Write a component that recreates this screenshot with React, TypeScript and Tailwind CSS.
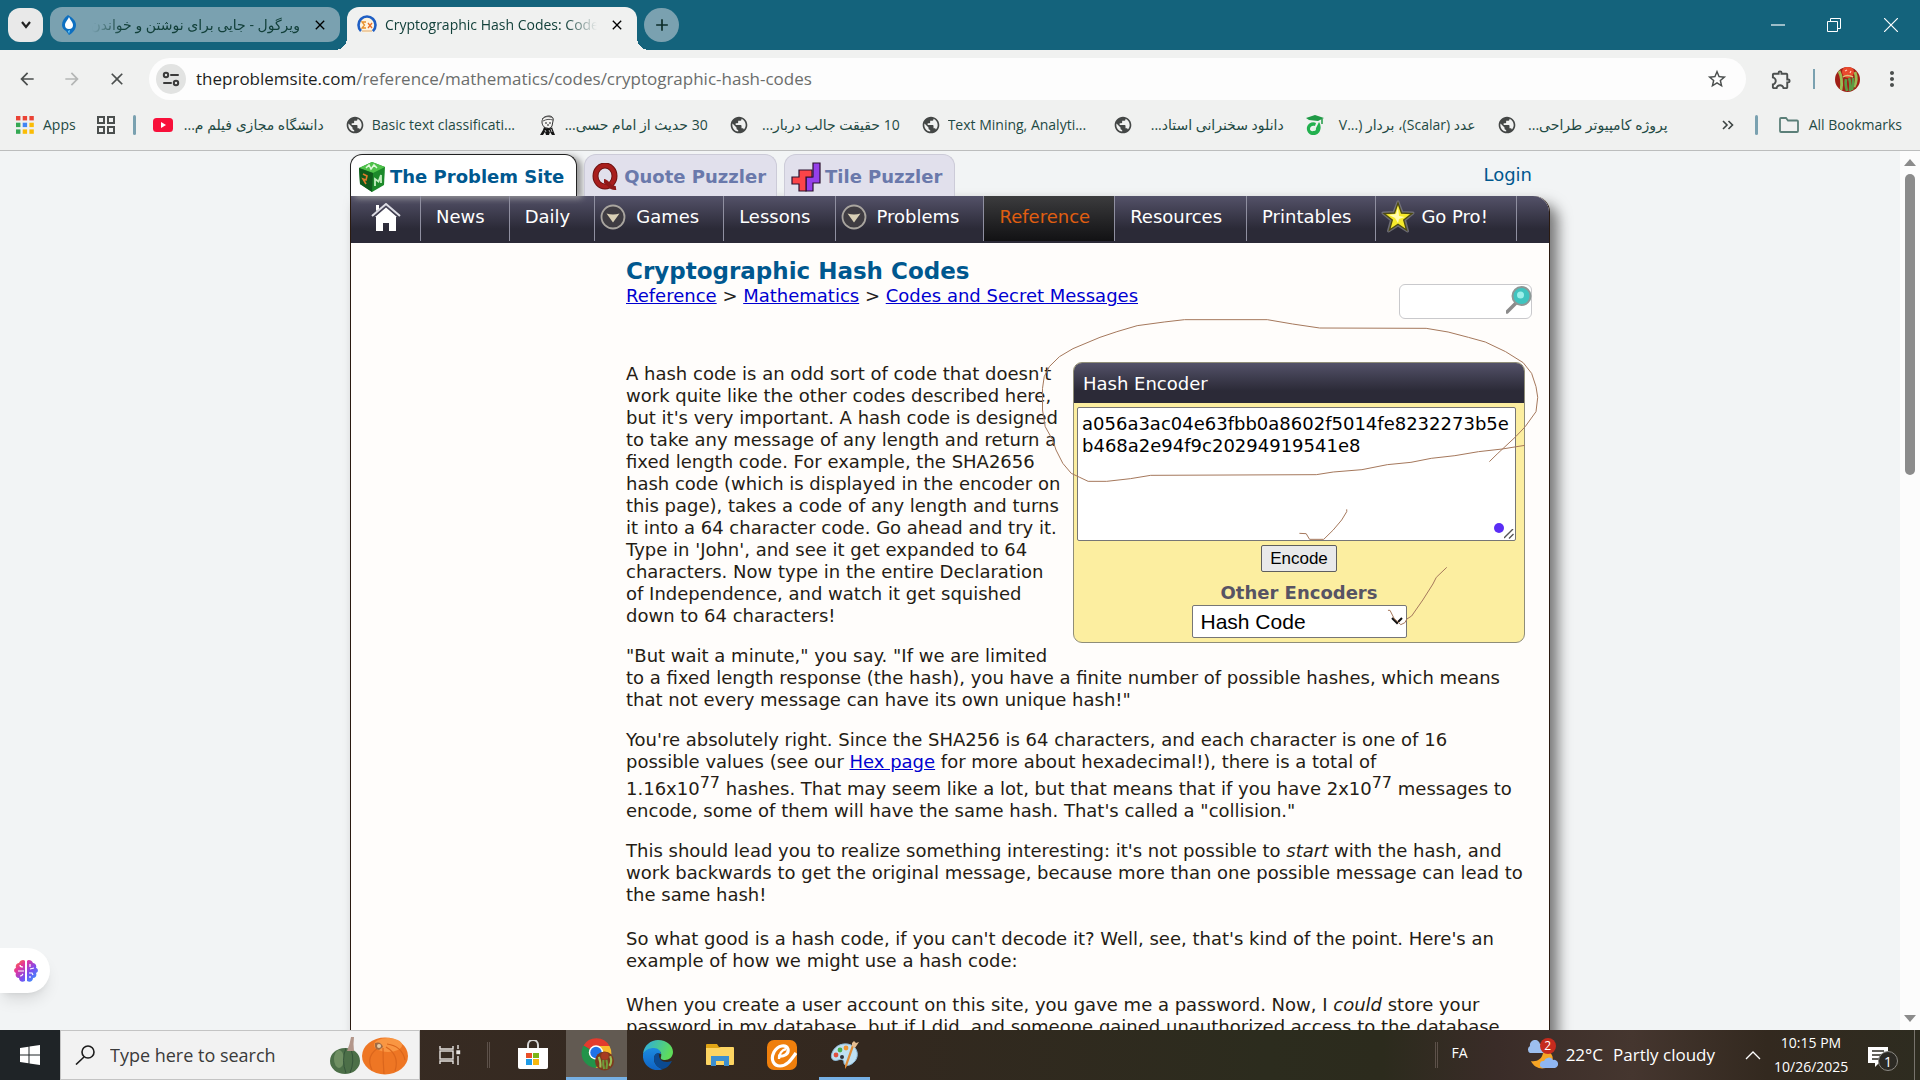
import type { ReactNode } from "react";
import { MdPublic, MdOutlineExtension, MdStarBorder, MdMoreVert, MdArrowBack, MdArrowForward, MdClose, MdAdd } from "react-icons/md";

const VERDANA = "font-['DejaVu_Sans',Verdana,sans-serif]";

/* ---------- small drawings ---------- */

function VirgoolIcon() {
  return (
    <svg viewBox="0 0 14 20" className="h-5 w-3.5 shrink-0">
      <path d="M6 0C2 3 0 6 0 10c0 3 2 5 4 6l3 4c4-2 7-6 7-10 0-4-3-7-8-10z" fill="#0d6fc0" />
      <path d="M7 2c1 3 4 5 4 8a4 4 0 0 1-8 0c0-3 3-5 4-8z" fill="#fff" />
      <path d="M6 16l2-1-1 4z" fill="#6fd3ff" />
    </svg>
  );
}

function SigmaIcon() {
  return (
    <svg viewBox="0 0 20 20" className="size-5 shrink-0">
      <circle cx="10" cy="10" r="8" fill="#fff4de" />
      <circle cx="10" cy="10" r="8.500" fill="none" stroke="#1f5fc4" strokeWidth="2.600" strokeDasharray="40 14" transform="rotate(135 10 10)" />
      <path d="M9 7H5l2.500 3L5 13h4" fill="none" stroke="#e8902a" strokeWidth="1.300" />
      <path d="M11 8l4 5M15 8l-4 5" stroke="#e8702a" strokeWidth="1.300" />
      <path d="M5 16h10" stroke="#e8c090" strokeWidth="1.500" />
    </svg>
  );
}

function TuneIcon() {
  return (
    <svg viewBox="0 0 18 18" className="size-[18px]" fill="none" stroke="#3a3a3a" strokeWidth="2">
      <circle cx="4" cy="5" r="2.200" />
      <path d="M9 5h7M2 13h7" strokeLinecap="round" />
      <circle cx="14" cy="13" r="2.200" />
    </svg>
  );
}

function AppsIcon() {
  const colors = ["#ea4335", "#ea4335", "#ea4335", "#34a853", "#4285f4", "#fbbc05", "#34a853", "#fbbc05", "#fbbc05"];
  return (
    <svg viewBox="0 0 18 18" className="size-[18px] shrink-0">
      {colors.map((c, i) => (
        <rect key={i} x={(i % 3) * 6.700} y={Math.floor(i / 3) * 6.700} width="4.400" height="4.400" fill={c} />
      ))}
    </svg>
  );
}

function GridIcon() {
  return (
    <svg viewBox="0 0 20 20" className="size-5 shrink-0" fill="none" stroke="#4b4f4e" strokeWidth="2">
      <rect x="2" y="2" width="6" height="6" />
      <rect x="12" y="2" width="6" height="6" />
      <rect x="2" y="12" width="6" height="6" />
      <rect x="12" y="12" width="6" height="6" />
    </svg>
  );
}

function YoutubeIcon() {
  return (
    <svg viewBox="0 0 20 20" className="size-5 shrink-0">
      <rect x="0" y="3" width="20" height="14" rx="3.500" fill="#f8103a" />
      <path d="M8 7l5 3-5 3z" fill="#fff" />
    </svg>
  );
}

function SageIcon() {
  return (
    <svg viewBox="0 0 20 20" className="size-5 shrink-0">
      <path d="M5 7c0-4 3-6 7-6 3 0 5 2 4 5l-1 5c-1 2-3 3-5 2-3 0-5-3-5-6z" fill="#f4f4f2" stroke="#333" />
      <path d="M5 4c3-3 7-3 11-1M6 6c4-2 6-2 10-1" stroke="#555" fill="none" />
      <path d="M8 8h2M12 8h2M11 9v2" stroke="#222" />
      <path d="M7 12c2 2 3 1 4 1s3 1 4-1l1 3 2 5h-3l-2-3-1 3H9l-1-3-2 3H3l3-5z" fill="#161616" />
      <path d="M8 15l1 2M12 15l1 2M14 14l1 3" stroke="#ddd" strokeWidth=".8" />
    </svg>
  );
}

function GraduateIcon() {
  return (
    <svg viewBox="0 0 20 20" className="size-5 shrink-0">
      <path d="M1 3l9-3 9 3-6 3-9-1z" fill="#1f9a45" />
      <path d="M17 4v5" stroke="#1f9a45" strokeWidth="1.500" />
      <path d="M14 7c3 4 2 12-4 13-5 1-9-3-8-8 1-4 6-6 9-4l-1 3c-3-1-5 1-5 3 0 3 5 3 6-1z" fill="#22b04e" />
      <circle cx="9" cy="14" r="2" fill="#dff5e4" />
    </svg>
  );
}

function FolderOutline() {
  return (
    <svg viewBox="0 0 20 18" className="h-[18px] w-5 shrink-0" fill="none" stroke="#5b7f78" strokeWidth="1.800">
      <path d="M1 3a1 1 0 0 1 1-1h5l2 2.500h9a1 1 0 0 1 1 1V15a1 1 0 0 1-1 1H2a1 1 0 0 1-1-1z" />
    </svg>
  );
}

function Peppers({ className }: { className: string }) {
  return (
    <svg viewBox="0 0 25 25" className={className}>
      <clipPath id="disc"><circle cx="12.500" cy="12.500" r="12.500" /></clipPath>
      <g clipPath="url(#disc)">
        <rect width="25" height="25" fill="#a01f16" />
        <circle cx="13" cy="5" r="6" fill="#ea4a2e" />
        <path d="M10 4l2-1M15 6l1-2" stroke="#ffc9b8" strokeWidth="1.200" />
        <path d="M4 4q4 8 2 19M20 5q3 8-1 15" stroke="#9cbb54" strokeWidth="2.800" fill="none" />
        <path d="M11 12q-1 5 1 12M14 11q2 5 1 13M18 11q1 6-1 12" stroke="#5d9a45" strokeWidth="2.600" fill="none" />
        <path d="M8 10q4-3 10 0" stroke="#d9c67a" strokeWidth="1.500" fill="none" />
      </g>
    </svg>
  );
}

function CubeIcon() {
  return (
    <svg viewBox="0 0 28 30" className="h-[30px] w-7 shrink-0">
      <path d="M14 0l13 5-1 18-12 7L2 22 1 6z" fill="#1c8a2a" />
      <path d="M14 0l13 5-12 6L1 6z" fill="#4fc24a" />
      <path d="M1 6l14 5-1 19L2 22z" fill="#0f5a1b" />
      <path d="M8 6l3-3 2 4 3-4 3 3" stroke="#dff8da" strokeWidth="1.500" fill="none" />
      <path d="M17 24v-7l3.500 2.500L23 13v8" stroke="#c5efc0" strokeWidth="1.800" fill="none" />
      <path d="M5 12l4 2-1 4-3-1 3 5" stroke="#e07b2b" strokeWidth="1.600" fill="none" />
    </svg>
  );
}

function QIcon() {
  return (
    <svg viewBox="0 0 26 28" className="h-7 w-[26px] shrink-0" fill="none">
      <ellipse cx="13" cy="13" rx="9.500" ry="10.500" stroke="#6e1212" strokeWidth="6" />
      <ellipse cx="13" cy="13" rx="9.500" ry="10.500" stroke="#a81e1e" strokeWidth="4" />
      <path d="M12 18c4 0 5 8 12 7" stroke="#8f1818" strokeWidth="4" />
    </svg>
  );
}

function TileIcon() {
  return (
    <svg viewBox="0 0 30 30" className="size-[30px] shrink-0" stroke="#2c1230" strokeWidth="1.200">
      <path d="M22 1h7v20h-7v8h-7V15h7z" fill="#9540ea" />
      <path d="M8 8h13v7h-6v14H8v-7H1v-7h7z" fill="#fb4448" />
    </svg>
  );
}

function HomeIcon() {
  return (
    <svg viewBox="0 0 30 29" className="h-[29px] w-[30px]">
      <path d="M1 13L15 1l14 12" fill="none" stroke="#dcdce4" strokeWidth="2" />
      <path d="M5 2h3v4L5 8z" fill="#fff" />
      <path d="M4 14L15 4.500 26 14h-1v14h-7v-8h-6v8H5V14z" fill="#fff" />
    </svg>
  );
}

function ArrowBadge() {
  return (
    <svg viewBox="0 0 26 26" className="size-[26px]">
      <circle cx="13" cy="13" r="11.500" fill="#3f3c42" stroke="#a9a59f" strokeWidth="1.800" />
      <path d="M6.500 9.500q6.500 2 13 0L13 18.500z" fill="#d9d0b6" />
    </svg>
  );
}

function StarBadge() {
  return (
    <svg viewBox="0 0 34 34" className="size-[34px]">
      <path d="M17 2l4 10.500 11 .5-8.500 7 3 11-9.500-6-9.500 6 3-11L2 13l11-.5z" fill="#85858a" stroke="#85858a" strokeWidth="3" strokeLinejoin="round" opacity=".7" />
      <path d="M17 3l3.500 10 10.500.5-8.300 6.500 2.800 10L17 24.200 8.500 30l2.800-10L3 13.500 13.500 13z" fill="#f6ea2c" stroke="#4d4a12" strokeWidth="1.300" />
      <path d="M17 7l1 9 6 1-6 2-1 4-3-5-6-3 7-1z" fill="#fffbb0" />
    </svg>
  );
}

function MagnifierIcon() {
  return (
    <svg viewBox="0 0 26 28" className="h-7 w-[26px]">
      <path d="M1 26L12 15" stroke="#8b8b8b" strokeWidth="3.500" strokeLinecap="round" />
      <circle cx="15.500" cy="10" r="9" fill="#3fc4bf" stroke="#8d9896" strokeWidth="2" />
      <circle cx="14.500" cy="9" r="3.500" fill="#9cf0ea" />
    </svg>
  );
}

function BrainIcon() {
  return (
    <svg viewBox="0 0 24 24" className="size-6">
      <defs>
        <linearGradient id="brain" x1="0" y1="0" x2="1" y2="1">
          <stop offset="0" stopColor="#ff7a2f" />
          <stop offset=".3" stopColor="#e3359c" />
          <stop offset=".6" stopColor="#7b4df0" />
          <stop offset="1" stopColor="#28a5ff" />
        </linearGradient>
      </defs>
      <path d="M11 2v20c-3 2-6 0-6-3-3 0-4-3-3-5-3-1-2-5 0-5-1-3 1-5 3-5 1-3 5-4 6-2zM13 2v20c3 2 6 0 6-3 3 0 4-3 3-5 3-1 2-5 0-5 1-3-1-5-3-5-1-3-5-4-6-2z" fill="url(#brain)" />
      <path d="M6 6c0 2 1 2 3 2M4 12h6M6 17c2 0 2-1 3-2M16 5v3M20 9l-4 1M15 14h3l1 2M16 19v-2" stroke="#fff" strokeWidth="1.200" fill="none" />
    </svg>
  );
}

function WindowsLogo() {
  return (
    <svg viewBox="0 0 20 20" className="size-5" fill="#fff">
      <path d="M0 3l8.500-1.200v7.700H0zM9.500 1.600L20 0v9.500H9.500zM0 10.500h8.500v7.700L0 17zM9.500 10.500H20V20l-10.500-1.500z" />
    </svg>
  );
}

function PumpkinArt() {
  return (
    <svg viewBox="0 0 80 40" className="h-10 w-20">
      <ellipse cx="16" cy="26" rx="15" ry="13" fill="#4c6f48" />
      <ellipse cx="10" cy="24" rx="5" ry="9" fill="#6f8f62" />
      <path d="M17 13q-5 12 0 25M22 14q4 12-1 24" stroke="#35543a" fill="none" />
      <path d="M18 16q3-7 4-14l3 0q-1 7 0 14z" fill="#b3968a" />
      <ellipse cx="56" cy="21" rx="23" ry="18.500" fill="#ee7624" />
      <ellipse cx="59" cy="10" rx="14" ry="7" fill="#f99642" />
      <path d="M51 12q-15 8-8 23M54 13q0 14 1 26M57 12q14 8 9 24M58 9q15 2 18 16" stroke="#db661c" fill="none" strokeWidth="1.200" />
      <path d="M46 8q6-2 8 4l-4 3q-5-1-4-7z" fill="#a06a45" />
      <circle cx="50" cy="11" r="2" fill="#e5cba6" />
    </svg>
  );
}

function TaskViewIcon() {
  return (
    <svg viewBox="0 0 22 20" className="h-5 w-[22px]" fill="none" stroke="#e6e3e0" strokeWidth="1.400">
      <path d="M1 1v3h13V1M1 19v-3h13v3" />
      <rect x="1" y="6" width="13" height="8" />
      <path d="M19 0v4M19 11v9" />
      <rect x="18" y="6" width="2.500" height="2.500" fill="#e6e3e0" />
    </svg>
  );
}

function StoreIcon() {
  return (
    <svg viewBox="0 0 30 30" className="size-[30px]">
      <path d="M10 9V5a5 5 0 0 1 10 0v4" fill="none" stroke="#d5d5d5" strokeWidth="2" />
      <path d="M0 8h30v19a2 2 0 0 1-2 2H2a2 2 0 0 1-2-2z" fill="#fff" />
      <path d="M8 13h6v5H8z" fill="#e8502a" />
      <path d="M15 13h6v5h-6z" fill="#7cb518" />
      <path d="M8 19h6v6H8z" fill="#1f9be6" />
      <path d="M15 19h6v6h-6z" fill="#f7b80e" />
    </svg>
  );
}

function ChromeIcon() {
  return (
    <svg viewBox="0 0 34 34" className="size-[34px]">
      <path d="M16 16L3.500 8.500A15 15 0 0 1 29.500 9H16z" fill="#e33b2e" />
      <path d="M16 16l0-7h13.500A15 15 0 0 1 15 31z" fill="#f9bb2d" />
      <path d="M16 16L3.500 8.500A15 15 0 0 0 16 31l6-11z" fill="#22934a" />
      <circle cx="16" cy="15.500" r="7.200" fill="#fff" />
      <circle cx="16" cy="15.500" r="5.700" fill="#1f72e8" />
      <svg x="15" y="14" width="19" height="20" viewBox="0 0 25 25">
        <circle cx="12.500" cy="12.500" r="12.500" fill="#7c3a1e" />
        <circle cx="13" cy="6" r="5" fill="#a83a22" />
        <path d="M5 7q3 8 2 14M20 6q3 7-1 13" stroke="#9cbb54" strokeWidth="2.800" fill="none" />
        <path d="M11 11q-1 6 1 12M15 11q2 6 0 12" stroke="#6f9a3a" strokeWidth="2.800" fill="none" />
      </svg>
    </svg>
  );
}

function EdgeIcon() {
  return (
    <svg viewBox="0 0 30 30" className="size-[30px]">
      <defs>
        <linearGradient id="edgeTop" x1="0" y1="0" x2="1" y2=".3">
          <stop offset="0" stopColor="#2aa9e8" />
          <stop offset="1" stopColor="#5fdc5a" />
        </linearGradient>
        <linearGradient id="edgeLow" x1="0" y1="0" x2="0" y2="1">
          <stop offset="0" stopColor="#1c8be0" />
          <stop offset="1" stopColor="#0f63c4" />
        </linearGradient>
      </defs>
      <path d="M0 14C1 5 8 0 15 0c9 0 15 6 15 12 0 5-4 8-8 8-3 0-5-1-4-3 1-3 0-7-6-8-5 0-10 2-12 5z" fill="url(#edgeTop)" />
      <path d="M0 14c2-4 6-6 11-6 4 0 7 3 7 6-4-2-7 0-7 5s4 9 9 10c-2 1-4 1-5 1C6 30-1 23 0 14z" fill="url(#edgeLow)" />
      <path d="M11 19c0-4 2-6 5-6-1 6 3 9 8 9 2 0 4-1 5-1-2 4-5 7-9 8-5-1-9-5-9-10z" fill="#0b4a92" />
    </svg>
  );
}

function ExplorerIcon() {
  return (
    <svg viewBox="0 0 28 24" className="h-6 w-7">
      <path d="M0 2a1 1 0 0 1 1-1h10l2 3h14v5H0z" fill="#e0a415" />
      <path d="M0 5h13l2-1h12a1 1 0 0 1 1 1v16a1 1 0 0 1-1 1H1a1 1 0 0 1-1-1z" fill="#fcd462" />
      <path d="M5 13h18v10h-5v-5h-8v5H5z" fill="#3c8fd0" />
    </svg>
  );
}

function EitaaIcon() {
  return (
    <svg viewBox="0 0 30 30" className="size-[30px]">
      <rect width="30" height="30" rx="7" fill="#ef7f0c" />
      <path d="M11 16c6 1 11-2 10-7-2-5-10-4-14 3-4 8 0 14 6 14 7 0 11-6 16-13" fill="none" stroke="#fff" strokeWidth="3.200" />
      <path d="M12 19c0-5 3-9 7-10" fill="none" stroke="#fff" strokeWidth="2.400" />
    </svg>
  );
}

function PaintIcon() {
  return (
    <svg viewBox="0 0 30 30" className="size-[30px]">
      <path d="M2 13C5 5 14 2 21 5c7 3 8 11 4 16-5 6-11 5-11 2 0-4-3-4-6-3-5 2-8-2-6-7z" fill="#bfe0f2" stroke="#8ab6d4" />
      <circle cx="6" cy="15" r="2.400" fill="#e05040" />
      <circle cx="10" cy="10" r="2.400" fill="#49ae4c" />
      <circle cx="16" cy="8" r="2.400" fill="#ef9533" />
      <circle cx="12" cy="17" r="2" fill="#30313a" />
      <path d="M24 6l-7 20-2 3 0-4 7-20z" fill="#e08b35" />
      <path d="M22 3l2-2 2 2 3-1-4 6-3-2z" fill="#e5bd90" />
    </svg>
  );
}

function WeatherIcon() {
  return (
    <svg viewBox="0 0 32 30" className="h-[30px] w-8">
      <path d="M17 13c-1 6-6 9-12 8 3 7 12 10 18 5 6-5 4-12 0-14z" fill="#f5a425" />
      <path d="M4 13a4 4 0 0 1 0-7 5 5 0 0 1 10-2 4.500 4.500 0 0 1 3 9z" fill="#9dbfee" />
      <path d="M17 28a3.500 3.500 0 0 1 1-7 5 5 0 0 1 9-1 4 4 0 0 1 2 8z" fill="#8fb6f2" />
    </svg>
  );
}

function NoteIcon() {
  return (
    <svg viewBox="0 0 20 20" className="size-5">
      <path d="M0 0h20v16h-9l-4 4v-4H0z" fill="#fff" />
      <path d="M4 4h12M4 8h12M4 12h7" stroke="#2f2c24" strokeWidth="1.300" />
    </svg>
  );
}

/* ---------- browser chrome ---------- */

function TabStrip() {
  return (
    <div className="flex h-[50px] shrink-0 items-end bg-[#14637c] pl-2 text-sm text-[#12403a]">
      <button aria-label="Search tabs" className="mb-2 grid h-[34px] w-[35px] place-items-center rounded-xl bg-[#e9e9e9]">
        <svg viewBox="0 0 12 8" className="h-2 w-3" fill="none" stroke="#222" strokeWidth="2.200"><path d="M2 1l4 5 4-5" /></svg>
      </button>
      <div className="mb-2 ml-[7px] flex h-[35px] w-[290px] items-center gap-2 rounded-xl bg-[#7aa1b0] pr-3 pl-3">
        <VirgoolIcon />
        <span dir="rtl" className="ml-2 min-w-0 flex-1 overflow-hidden whitespace-nowrap [mask-image:linear-gradient(to_left,black_85%,transparent)]">ویرگول - جایی برای نوشتن و خواندن</span>
        <button aria-label="Close tab" className="ml-1"><MdClose className="size-4 text-black" /></button>
      </div>
      <div className="relative ml-[7px] flex h-[43px] w-[290px] items-center gap-2 rounded-t-xl bg-[#f0f1f0] pr-3 pb-2 pl-2.5 before:absolute before:bottom-0 before:-left-3 before:size-3 before:bg-[radial-gradient(circle_at_0_0,transparent_12px,#f0f1f0_12px)] after:absolute after:-right-3 after:bottom-0 after:size-3 after:bg-[radial-gradient(circle_at_100%_0,transparent_12px,#f0f1f0_12px)]">
        <SigmaIcon />
        <span className="min-w-0 flex-1 overflow-hidden whitespace-nowrap [mask-image:linear-gradient(to_right,black_85%,transparent)]">Cryptographic Hash Codes: Codes</span>
        <button aria-label="Close tab" className="ml-1"><MdClose className="size-4 text-black" /></button>
      </div>
      <button aria-label="New tab" className="mb-2 ml-[7px] grid h-[34px] w-[35px] place-items-center rounded-full bg-[#7aa1b0]">
        <MdAdd className="size-5 text-[#0c2c28]" />
      </button>
      <div className="ml-auto flex h-full items-center text-white">
        <button aria-label="Minimize" className="grid w-14 place-items-center"><svg viewBox="0 0 12 12" className="size-3.5" stroke="currentColor"><path d="M0 6h12" /></svg></button>
        <button aria-label="Restore" className="grid w-14 place-items-center"><svg viewBox="0 0 14 14" className="size-3.5" fill="none" stroke="currentColor"><path d="M.5 3.500h10v10H.5zM3.500 3.500v-3h10v10h-3" /></svg></button>
        <button aria-label="Close" className="grid w-[58px] place-items-center"><svg viewBox="0 0 14 14" className="size-3.5" stroke="currentColor" strokeWidth="1.200"><path d="M0 0l14 14M14 0L0 14" /></svg></button>
      </div>
    </div>
  );
}

function Toolbar() {
  return (
    <div className="flex h-[54px] shrink-0 items-center bg-[#f0f1f0] pt-1 text-[#4b4f4e]">
      <button aria-label="Back" className="ml-[17px]"><MdArrowBack className="size-5" /></button>
      <button aria-label="Forward" className="ml-[25px] text-[#b4b6b5]"><MdArrowForward className="size-5" /></button>
      <button aria-label="Stop" className="ml-[25px]"><MdClose className="size-5" /></button>
      <div className="ml-[22px] flex h-[42px] flex-1 items-center rounded-full bg-[#fdfdfd] pr-[18px] pl-[7px]">
        <button aria-label="Site information" className="grid size-[30px] place-items-center rounded-full bg-[#e2e3e2]"><TuneIcon /></button>
        <div className="ml-2.5 flex-1 text-[17px] whitespace-nowrap text-[#6b6d6c]"><span className="text-[#1d1f1e]">theproblemsite.com</span>/reference/mathematics/codes/cryptographic-hash-codes</div>
        <button aria-label="Bookmark this tab"><MdStarBorder className="size-[22px]" /></button>
      </div>
      <button aria-label="Extensions" className="ml-6"><MdOutlineExtension className="size-[23px]" /></button>
      <span className="ml-5 h-5 w-0.5 bg-[#7aa1b0]" />
      <button aria-label="Profile" className="ml-5"><Peppers className="size-[25px]" /></button>
      <button aria-label="Menu" className="mr-4 ml-5"><MdMoreVert className="size-6" /></button>
    </div>
  );
}

function Bookmark({ icon, children, rtl = false }: { icon: ReactNode; children: ReactNode; rtl?: boolean }) {
  return (
    <a href="#" className="flex w-[192px] min-w-0 items-center gap-[7px]">
      {icon}
      <span dir={rtl ? "rtl" : "ltr"} className="w-[144px] overflow-hidden whitespace-nowrap">{children}</span>
    </a>
  );
}

function BookmarksBar() {
  const globe = <MdPublic className="size-5 shrink-0 text-[#444746]" />;
  return (
    <nav className="flex h-[47px] shrink-0 items-center border-b border-[#bcbdbd] bg-[#f0f1f0] pb-1 pl-4 text-sm text-[#1f4a44]">
      <a href="#" className="flex items-center gap-[9px]"><AppsIcon />Apps</a>
      <button aria-label="Tab groups" className="ml-5"><GridIcon /></button>
      <span className="mx-[17px] h-5 w-[3px] rounded-full bg-[#7aa1b0]" />
      <Bookmark rtl icon={<YoutubeIcon />}>دانشگاه مجازی فیلم م...</Bookmark>
      <Bookmark icon={globe}>Basic text classificati...</Bookmark>
      <Bookmark rtl icon={<SageIcon />}>30 حدیث از امام حسی...</Bookmark>
      <Bookmark rtl icon={globe}>10 حقیقت جالب دربار...</Bookmark>
      <Bookmark icon={globe}>Text Mining, Analyti...</Bookmark>
      <Bookmark rtl icon={globe}>دانلود سخنرانی استاد...</Bookmark>
      <Bookmark rtl icon={<GraduateIcon />}>عدد (Scalar)، بردار (<bdi dir="ltr">V...</bdi></Bookmark>
      <Bookmark rtl icon={globe}>پروژه کامپیوتر طراحی...</Bookmark>
      <div className="ml-auto flex items-center pr-[18px]">
        <button aria-label="More bookmarks">
          <svg viewBox="0 0 12 10" className="h-2.5 w-3" fill="none" stroke="#3c4443" strokeWidth="1.600"><path d="M1 1l4 4-4 4M6.500 1l4 4-4 4" /></svg>
        </button>
        <span className="mx-[21px] h-5 w-[3px] rounded-full bg-[#7aa1b0]" />
        <a href="#" className="flex items-center gap-2.5 whitespace-nowrap"><FolderOutline />All Bookmarks</a>
      </div>
    </nav>
  );
}

/* ---------- web page ---------- */

function NavItem({ label, badge, pad = "pl-[15px] pr-6", active = false }: { label: string; badge?: ReactNode; pad?: string; active?: boolean }) {
  return (
    <a
      href="#"
      className={
        "relative flex h-[45px] items-center border-r border-[#8f8fa0] pb-1 " + pad + " " +
        (active ? "bg-linear-to-b from-[#3c3c3e] to-[#121214] text-[#e05e10]" : "text-white")
      }
    >
      {badge && <span className="absolute left-[5px] flex h-[42px] items-center">{badge}</span>}
      {label}
    </a>
  );
}

function SiteTabs() {
  return (
    <div className="flex h-[45px] items-end gap-[7px] pt-[3px] text-lg font-bold">
      <a href="#" className="flex h-full items-center gap-1 rounded-t-xl border border-b-0 border-[#222] bg-white pt-0.5 pr-3 pl-[7px] whitespace-nowrap text-[#00588f] shadow-[5px_2px_6px_#999]"><CubeIcon />The Problem Site</a>
      <a href="#" className="flex h-full items-center gap-1.5 rounded-t-xl border border-b-0 border-[#cccbd8] bg-[#e1e0ec] pt-0.5 pr-2.5 pl-[7px] whitespace-nowrap text-[#6a79ab]"><QIcon />Quote Puzzler</a>
      <a href="#" className="flex h-full items-center gap-1 rounded-t-xl border border-b-0 border-[#cccbd8] bg-[#e1e0ec] pt-0.5 pr-3 pl-1.5 whitespace-nowrap text-[#6a79ab]"><TileIcon />Tile Puzzler</a>
      <a href="#" className="mr-[18px] ml-auto self-center font-normal text-[#00588f]">Login</a>
    </div>
  );
}

function SiteNav() {
  return (
    <nav className="flex h-[47px] rounded-tr-2xl bg-linear-to-b from-[#545269] to-[#2b2a37] to-70% text-lg/6">
      <a href="#" aria-label="Home" className="flex h-[45px] w-[70px] items-center justify-center border-r border-[#8f8fa0] pb-0.5"><HomeIcon /></a>
      <NavItem label="News" />
      <NavItem label="Daily" />
      <NavItem label="Games" badge={<ArrowBadge />} pad="pl-[41px] pr-6" />
      <NavItem label="Lessons" />
      <NavItem label="Problems" badge={<ArrowBadge />} pad="pl-[41px] pr-6" />
      <NavItem label="Reference" active />
      <NavItem label="Resources" />
      <NavItem label="Printables" />
      <NavItem label="Go Pro!" badge={<StarBadge />} pad="pl-[45px] pr-7" />
    </nav>
  );
}

function PenMarks() {
  return (
    <svg viewBox="0 0 1568 1020" preserveAspectRatio="none" className="pointer-events-none absolute top-[-53px] left-[-45px] z-10 h-[340px] w-[530px] max-w-none" fill="none" stroke="#a5785c">
      <path vectorEffect="non-scaling-stroke" d="M1362 455L1385 432 1440 380 1468 350 1500 305 1505 262 1500 230 1487 190 1462 158 1410 125 1350 96 1300 82 1240 66 1175 55 860 54 780 42 705 29 460 29 400 36 320 47 260 65 210 82 130 116 90 140 60 170 45 200 40 235 40 300 48 350 70 390 80 420 100 460 125 490 150 502 175 514 230 514 300 506 360 496 850 494 900 486 985 479 1060 464 1130 457 1190 445 1260 437 1330 425 1400 417 1467 406" />
      <path vectorEffect="non-scaling-stroke" d="M800 670L820 671 830 688 872 688 900 660 925 630 940 605 940 598" />
      <path vectorEffect="non-scaling-stroke" d="M1062 901L1068 901 1080 925 1100 944 1112 938 1118 927 1132 918 1165 870 1195 822 1205 802 1236 772" />
    </svg>
  );
}

function HashEncoder() {
  return (
    <section className="relative float-right -mt-px mb-2.5 ml-2.5 w-[452px] rounded-[9px] border border-[#8f8d78] bg-[#fceea0] text-lg/[22px]">
      <h2 className="h-10 rounded-t-lg bg-linear-to-b from-[#545269] to-[#2b2a37] to-70% pl-[9px] leading-[42px] text-white">Hash Encoder</h2>
      <div className="flex flex-col items-center pb-1">
        <div className="relative mt-1 mr-2 ml-[3px] self-stretch">
          <textarea
            aria-label="Message"
            readOnly
            className="block h-[134px] w-full resize-none rounded-xs border border-[#767676] bg-white px-1 py-[5px] break-all text-black"
            defaultValue="a056a3ac04e63fbb0a8602f5014fe8232273b5eb468a2e94f9c20294919541e8"
          />
          <span className="absolute right-3 bottom-2 size-2.5 rounded-full bg-[#5a2df5]" />
          <svg viewBox="0 0 10 10" className="absolute right-0.5 bottom-0.5 size-2.5" stroke="#555" strokeWidth="1.400"><path d="M0 9L9 0M5 9.500L9.500 5" /></svg>
        </div>
        <button className="mt-1 h-[27px] rounded-xs border border-[#5e5e5e] bg-[#e9e9ea] px-2 font-['Liberation_Sans',Arial,sans-serif] text-[17px]/6 text-black">Encode</button>
        <label htmlFor="encoder" className="mt-2.5 font-bold text-[#575364]">Other Encoders</label>
        <div className="relative mt-px">
          <select id="encoder" className="block h-[33px] w-[215px] appearance-none rounded-xs border border-[#767676] bg-white pl-2 font-['Liberation_Sans',Arial,sans-serif] text-[21px]/7 text-black">
            <option>Hash Code</option>
          </select>
          <svg viewBox="0 0 12 8" className="pointer-events-none absolute top-3 right-1 h-2 w-3" fill="none" stroke="#111" strokeWidth="2"><path d="M1 1l5 5 5-5" /></svg>
        </div>
      </div>
      <PenMarks />
    </section>
  );
}

function Article() {
  return (
    <main className="pt-[14px] pr-[17px] pb-10 pl-[275px]">
      <h1 className="text-[23px]/[28px] font-bold text-[#00588f]">Cryptographic Hash Codes</h1>
      <div className="flex h-[34px] items-start justify-between text-lg/[22px] text-[#222]">
        <div>
          <a href="#" className="text-[#0000d0] underline">Reference</a> &gt; <a href="#" className="text-[#0000d0] underline">Mathematics</a> &gt; <a href="#" className="text-[#0000d0] underline">Codes and Secret Messages</a>
        </div>
        <div className="relative -mt-px">
          <input aria-label="Search" className="block h-[35px] w-[133px] rounded-md border border-[#c9c9cc] bg-white px-2" />
          <button aria-label="Go" className="absolute top-0.5 right-0"><MagnifierIcon /></button>
        </div>
      </div>
      <div className="pt-[44px] pr-[7px] text-lg/[22px] text-[#251c14]">
        <HashEncoder />
        <p className="mb-[18px]">A hash code is an odd sort of code that doesn't work quite like the other codes described here, but it's very important. A hash code is designed to take any message of any length and return a fixed length code. For example, the SHA2656 hash code (which is displayed in the encoder on this page), takes a code of any length and turns it into a 64 character code. Go ahead and try it. Type in 'John', and see it get expanded to 64 characters. Now type in the entire Declaration of Independence, and watch it get squished down to 64 characters!</p>
        <p className="mb-[18px]">"But wait a minute," you say. "If we are limited to a fixed length response (the hash), you have a finite number of possible hashes, which means that not every message can have its own unique hash!"</p>
        <p className="mb-[18px]">You're absolutely right. Since the SHA256 is 64 characters, and each character is one of 16 possible values (see our <a href="#" className="text-[#0000d0] underline">Hex page</a> for more about hexadecimal!), there is a total of<br />1.16x10<sup className="static align-super text-base/5">77</sup> hashes. That may seem like a lot, but that means that if you have 2x10<sup className="static align-super text-base/5">77</sup> messages to encode, some of them will have the same hash. That's called a "collision."</p>
        <p className="mb-[22px]">This should lead you to realize something interesting: it's not possible to <i>start</i> with the hash, and work backwards to get the original message, because more than one possible message can lead to the same hash!</p>
        <p className="mb-[22px]">So what good is a hash code, if you can't decode it? Well, see, that's kind of the point. Here's an example of how we might use a hash code:</p>
        <p>When you create a user account on this site, you gave me a password. Now, I <i>could</i> store your password in my database, but if I did, and someone gained unauthorized access to the database,</p>
      </div>
    </main>
  );
}

function Scrollbar() {
  return (
    <div className="flex w-5 shrink-0 flex-col items-center bg-[#fcfcfc] py-2">
      <svg viewBox="0 0 12 7" className="h-[7px] w-3" fill="#8b8b8b"><path d="M0 7l6-7 6 7z" /></svg>
      <div className="mt-2 h-[301px] w-2.5 rounded-full bg-[#8b8b8b]" />
      <svg viewBox="0 0 12 7" className="mt-auto h-[7px] w-3" fill="#8b8b8b"><path d="M0 0l6 7 6-7z" /></svg>
    </div>
  );
}

/* ---------- taskbar ---------- */

function Taskbar() {
  return (
    <footer className="flex h-[50px] shrink-0 items-stretch bg-[linear-gradient(to_right,#3a2d25_0%,#33281f_45%,#2c2c1e_66%,#2c2b1d_72%,#3a2c28_78%,#45362f_85%,#33291f_92%,#2e2c20_100%)] text-white">
      <button aria-label="Start" className="grid w-[60px] place-items-center bg-[#1f2427]"><WindowsLogo /></button>
      <label className="flex w-[360px] items-center border border-[#c4c4c4] bg-[#f2f2f2] pl-[14px]">
        <svg viewBox="0 0 21 20" className="h-5 w-[21px]" fill="none" stroke="#1c1c1c" strokeWidth="1.600"><circle cx="13" cy="7" r="6" /><path d="M9 12l-8 7.500" /></svg>
        <input aria-label="Search" placeholder="Type here to search" className="ml-[14px] min-w-0 flex-1 text-lg text-[#333] outline-none placeholder:text-[#3a3a3a]" />
        <span className="mr-2.5"><PumpkinArt /></span>
      </label>
      <button aria-label="Task view" className="grid w-[60px] place-items-center"><TaskViewIcon /></button>
      <span className="my-3 ml-[7px] w-[3px] border-x border-[#5d514a]" />
      <button aria-label="Microsoft Store" className="ml-[13px] grid w-[60px] place-items-center"><StoreIcon /></button>
      <button aria-label="Google Chrome" className="ml-[3px] grid w-[61px] place-items-center border-b-[3px] border-[#76b0e4] bg-[#625a52]"><ChromeIcon /></button>
      <button aria-label="Microsoft Edge" className="grid w-[62px] place-items-center"><EdgeIcon /></button>
      <button aria-label="File Explorer" className="grid w-[62px] place-items-center"><ExplorerIcon /></button>
      <button aria-label="Eitaa" className="grid w-[62px] place-items-center"><EitaaIcon /></button>
      <button aria-label="Paint" className="ml-1.5 grid w-[51px] place-items-center border-b-[3px] border-[#76b0e4] pt-[3px]"><PaintIcon /></button>
      <div className="ml-auto flex items-center">
        <span className="h-[26px] w-[3px] border-x border-[#5d514a]" />
        <button className="ml-3.5 pb-1 text-sm">FA</button>
        <button className="ml-[58px] flex items-center gap-2 text-[17px] whitespace-nowrap">
          <span className="relative">
            <WeatherIcon />
            <span className="absolute -top-0.5 right-0.5 grid size-4 place-items-center rounded-full bg-[#c52b1e] text-xs">2</span>
          </span>
          <span>22°C</span>
          <span className="ml-0.5">Partly cloudy</span>
        </button>
        <button aria-label="Show hidden icons" className="ml-[30px]"><svg viewBox="0 0 16 9" className="h-[9px] w-4" fill="none" stroke="#fff" strokeWidth="1.300"><path d="M1 8l7-7 7 7" /></svg></button>
        <div className="ml-[13px] w-[74px] text-center text-sm/6 whitespace-nowrap"><div>10:15 PM</div><div>10/26/2025</div></div>
        <button aria-label="Notifications" className="relative mr-4 ml-5 h-8 w-[30px] pt-1">
          <NoteIcon />
          <span className="absolute right-0 bottom-0 grid size-5 place-items-center rounded-full border border-[#8b8984] bg-[#2c2a24] text-sm">1</span>
        </button>
        <span className="mr-[5px] h-full w-px bg-[#77736c]" />
      </div>
    </footer>
  );
}

export default function App() {
  return (
    <div className="flex h-screen flex-col overflow-hidden font-['Open_Sans','DejaVu_Sans',sans-serif]">
      <header className="shrink-0">
        <TabStrip />
        <Toolbar />
        <BookmarksBar />
      </header>
      <div className="relative flex min-h-0 flex-1 bg-[#f2f4f5]">
        <div className={"min-w-0 flex-1 overflow-hidden " + VERDANA}>
          <div className="mx-auto w-[1200px] max-w-full">
            <SiteTabs />
            <div className="rounded-tr-2xl border-x border-[#2a1a10] bg-[#fffdfb] shadow-[8px_8px_14px_#777]">
              <SiteNav />
              <Article />
            </div>
          </div>
        </div>
        <Scrollbar />
        <button aria-label="Open assistant" className="absolute bottom-[37px] left-0 flex h-[45px] w-[50px] items-center justify-end rounded-r-full bg-white pr-3 shadow-lg"><BrainIcon /></button>
      </div>
      <Taskbar />
    </div>
  );
}
